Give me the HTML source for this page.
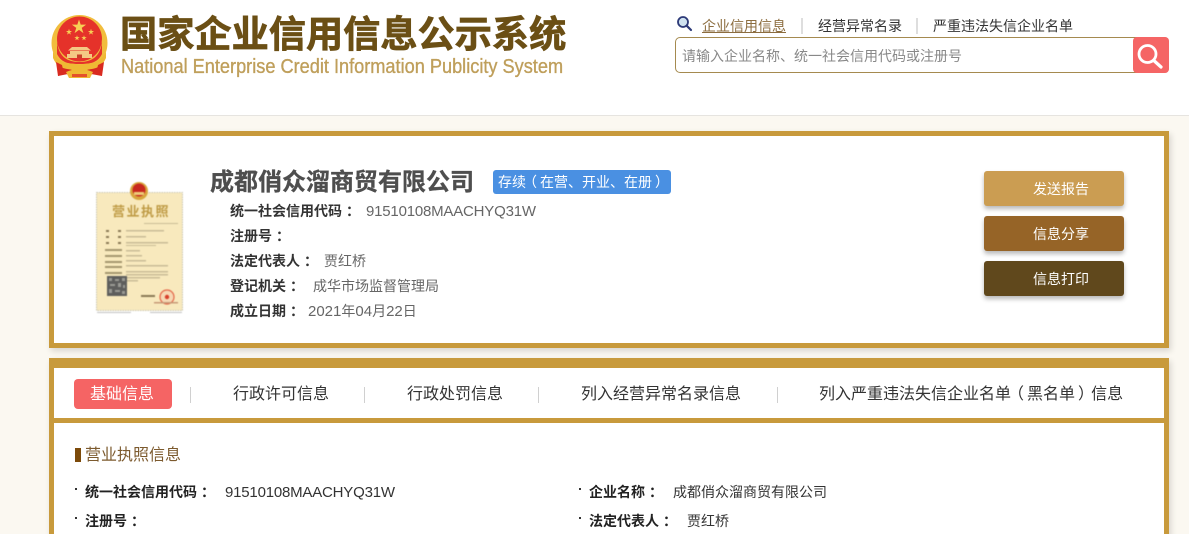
<!DOCTYPE html>
<html lang="zh-CN">
<head>
<meta charset="utf-8">
<title>国家企业信用信息公示系统</title>
<style>
*{margin:0;padding:0;box-sizing:border-box}
html,body{width:1189px;height:534px;overflow:hidden;background:#fbf8f1}
body{position:relative;font-family:"Liberation Sans","Noto Sans CJK SC",sans-serif;font-size:14px;color:#333}
.a{position:absolute;white-space:nowrap}
.hdr{left:0;top:0;width:1189px;height:116px;background:#fff;border-bottom:1px solid #e6e4e0}
.t{line-height:20px;height:20px}
.b{font-weight:bold;color:#333}
.v{color:#666}
.v2{color:#333}
.num{font-size:15px;letter-spacing:-.2px;line-height:0}
.sep{width:1px;background:#d0d0d0}
.sep2{width:2px;background:#dedede}
.card{left:49px;background:#fff;border:5px solid #c89a3c;box-shadow:2px 3px 6px rgba(0,0,0,.14)}
.btn{left:984px;width:140px;height:35px;border-radius:3px;color:#fff;line-height:36px;padding-left:49px;box-shadow:0 3px 5px rgba(0,0,0,.28)}
.tab{font-size:16px;line-height:22px;height:22px;color:#333;top:384px}
.par{line-height:0;position:relative}
.pl{left:-3px}
.pr{left:3px}
.co{left:4px}
</style>
</head>
<body>
<div class="a hdr"></div>

<svg class="a" style="left:50px;top:12px;filter:blur(.35px)" width="60" height="68" viewBox="0 0 60 68">
  <defs><polygon id="s" points="0,-1 .225,-.309 .951,-.309 .363,.118 .588,.809 0,.382 -.588,.809 -.363,.118 -.951,-.309 -.225,-.309"/></defs>
  <path d="M8 50 L8 64 L18 62 L22 66 L37 66 L41 62 L52 64 L52 50Z" fill="#d92a20"/>
  <circle cx="29.500" cy="31" r="28" fill="#f1bd3d"/>
  <circle cx="29.500" cy="27" r="22.500" fill="#e5322a"/>
  <path d="M7 30 C9 47 20 50 29.500 50 C39 50 50 47 52 30 L52 42 C47 52 38 52 29.500 52 C21 52 12 52 7 42Z" fill="#e5322a"/>
  <g fill="#f7cf55">
    <use href="#s" transform="translate(29,15) scale(7.500)"/>
    <use href="#s" transform="translate(19,20) scale(3.200)"/>
    <use href="#s" transform="translate(41,20) scale(3.200)"/>
    <use href="#s" transform="translate(27,26) scale(2.800)"/>
    <use href="#s" transform="translate(34,26) scale(2.800)"/>
  </g>
  <path d="M22 35h15l4 3.500H18zM20 39h19v3H20zM17 42h25v4H17z" fill="#f4c884"/>
  <rect x="27" y="42.500" width="5" height="3.500" fill="#c8402a"/>
  <path d="M3 40 C10 54 20 50 29.500 53 C39 50 49 54 56 40 L56 46 C50 60 38 56 29.500 59 C21 56 9 60 3 46Z" fill="#efb934"/>
  <path d="M6 50 L8 64 L14 62 L12 53Z M54 50 L52 64 L46 62 L48 53Z" fill="#d92a20"/>
  <path d="M16 60 Q29.500 54 43 60 L40 66 L19 66Z" fill="#efb934"/>
  <path d="M22 62h15v3H22z" fill="#e5502a"/>
</svg>

<div class="a" style="left:120px;top:11px;font-size:37.200px;line-height:46px;font-weight:bold;color:#6b4f15;-webkit-text-stroke:.7px #6b4f15">国家企业信用信息公示系统</div>
<div class="a" style="left:121px;top:54px;font-size:20px;line-height:26px;color:#bf9f5b;-webkit-text-stroke:.35px #bf9f5b;transform:scaleX(.908);transform-origin:0 0">National Enterprise Credit Information Publicity System</div>

<svg class="a" style="left:676px;top:15px" width="17" height="17" viewBox="0 0 17 17">
  <circle cx="7" cy="7" r="5" fill="#cfe2f0" stroke="#2d3a78" stroke-width="1.800"/>
  <path d="M10.800 10.800L15 15" stroke="#2d3a78" stroke-width="2.200" stroke-linecap="round"/>
</svg>
<div class="a t" style="left:702px;top:16px;color:#8c6d3f;text-decoration:underline">企业信用信息</div>
<div class="a sep2" style="left:801px;top:18px;height:16px"></div>
<div class="a t" style="left:818px;top:16px;color:#333">经营异常名录</div>
<div class="a sep2" style="left:916px;top:18px;height:16px"></div>
<div class="a t" style="left:933px;top:16px;color:#333">严重违法失信企业名单</div>

<div class="a" style="left:675px;top:37px;width:494px;height:36px;background:#fff;border:1px solid #a58a4f;border-radius:5px"></div>
<div class="a t" style="left:682px;top:46px;color:#888">请输入企业名称、统一社会信用代码或注册号</div>
<div class="a" style="left:1133px;top:37px;width:36px;height:36px;background:#f56565;border-radius:4px"></div>
<svg class="a" style="left:1133px;top:37px" width="36" height="36" viewBox="0 0 36 36">
  <circle cx="14.500" cy="17" r="8.500" fill="none" stroke="#fff" stroke-width="2.800"/>
  <path d="M20.800 23.500L28 30" stroke="#fff" stroke-width="3.200" stroke-linecap="round"/>
</svg>

<div class="a card" style="top:131px;width:1120px;height:217px"></div>

<svg class="a" style="left:94px;top:180px;filter:blur(.4px)" width="92" height="136" viewBox="0 0 92 136">
  <rect x="2.500" y="12.500" width="86" height="118" fill="#f8e9bd" stroke="#c9c6b4" stroke-dasharray="1.500 1"/>
  <circle cx="45" cy="11" r="9" fill="#d8a53c"/>
  <circle cx="45" cy="10" r="6.500" fill="#c8281e"/>
  <rect x="40" y="12" width="10" height="3" fill="#eecb78"/>
  <text x="18" y="36" font-size="13" font-weight="bold" fill="#bf9b45" letter-spacing="1.500" font-family="Liberation Sans,Noto Sans CJK SC,sans-serif">营业执照</text>
  <g fill="#c9bc96">
    <rect x="50" y="43" width="34" height="1"/>
    <rect x="32" y="50" width="38" height="1.500"/><rect x="32" y="56" width="20" height="1.500"/>
    <rect x="32" y="62" width="42" height="1.500"/><rect x="32" y="65" width="30" height="1"/>
    <rect x="32" y="70" width="14" height="1.500"/><rect x="32" y="75" width="16" height="1.500"/>
    <rect x="32" y="80" width="20" height="1.500"/><rect x="32" y="85" width="42" height="1.500"/>
    <rect x="32" y="91" width="42" height="1.500"/><rect x="32" y="94" width="42" height="1.500"/>
    <rect x="32" y="97" width="34" height="1.500"/><rect x="32" y="100" width="12" height="1.500"/>
  </g>
  <g fill="#8a7a55">
    <rect x="12" y="50" width="3" height="2"/><rect x="24" y="50" width="3" height="2"/>
    <rect x="12" y="56" width="3" height="2"/><rect x="24" y="56" width="3" height="2"/>
    <rect x="12" y="62" width="3" height="2"/><rect x="24" y="62" width="3" height="2"/>
    <rect x="11" y="69" width="17" height="2" opacity=".75"/><rect x="11" y="75" width="17" height="2" opacity=".75"/>
    <rect x="11" y="81" width="17" height="2" opacity=".75"/><rect x="11" y="86" width="17" height="2" opacity=".75"/>
    <rect x="11" y="92" width="17" height="2" opacity=".75"/>
  </g>
  <rect x="13" y="96" width="20" height="20" fill="#5e5e5c"/>
  <g fill="#9a9a94">
    <rect x="15" y="98" width="3" height="3"/><rect x="21" y="99" width="4" height="2"/><rect x="28" y="98" width="3" height="3"/>
    <rect x="16" y="104" width="5" height="2"/><rect x="24" y="103" width="3" height="4"/><rect x="29" y="105" width="2" height="3"/>
    <rect x="15" y="109" width="3" height="4"/><rect x="21" y="110" width="5" height="2"/><rect x="28" y="111" width="3" height="3"/>
  </g>
  <rect x="47" y="115" width="14" height="2" fill="#8a7a55"/>
  <circle cx="73" cy="117" r="7" fill="#f6d8b4" stroke="#e4684a" stroke-width="1.200"/>
  <circle cx="73" cy="117" r="2.200" fill="#d8402c"/>
  <rect x="60" y="122" width="24" height="1.500" fill="#c79a78"/>
  <rect x="3" y="132" width="34" height="1" fill="#c4c4c4"/>
  <rect x="56" y="132" width="32" height="1" fill="#c4c4c4"/>
</svg>

<div class="a" style="left:210px;top:167px;font-size:24px;line-height:32px;font-weight:bold;color:#4e4e4e;-webkit-text-stroke:.3px #4e4e4e">成都俏众溜商贸有限公司</div>
<div class="a" style="left:493px;top:170px;width:178px;height:24px;background:#4a90e2;border-radius:3px;color:#fff;line-height:24px;padding-left:5px">存续<span class="par pl">（</span>在营、开业、在册<span class="par pr">）</span></div>

<div class="a t b" style="left:230px;top:201px">统一社会信用代码<span class="par co">：</span></div>
<div class="a t v" style="left:366px;top:201px"><span class="num">91510108MAACHYQ31W</span></div>
<div class="a t b" style="left:230px;top:226px">注册号<span class="par co">：</span></div>
<div class="a t b" style="left:230px;top:251px">法定代表人<span class="par co">：</span></div>
<div class="a t v" style="left:324px;top:251px">贾红桥</div>
<div class="a t b" style="left:230px;top:276px">登记机关<span class="par co">：</span></div>
<div class="a t v" style="left:313px;top:276px">成华市场监督管理局</div>
<div class="a t b" style="left:230px;top:301px">成立日期<span class="par co">：</span></div>
<div class="a t v" style="left:308px;top:301px"><span class="num" style="letter-spacing:0">2021</span>年<span class="num" style="letter-spacing:0">04</span>月<span class="num" style="letter-spacing:0">22</span>日</div>

<div class="a btn" style="top:171px;background:#cb9d52">发送报告</div>
<div class="a btn" style="top:216px;background:#966427">信息分享</div>
<div class="a btn" style="top:261px;background:#60481c">信息打印</div>

<div class="a card" style="top:358px;width:1120px;height:190px;border-top-width:10px"></div>
<div class="a" style="left:49px;top:418px;width:1120px;height:5px;background:#c89a3c"></div>

<div class="a" style="left:74px;top:379px;width:98px;height:30px;background:#f56464;border-radius:4px;color:#fff;font-size:16px;line-height:31px;padding-left:16px">基础信息</div>
<div class="a sep" style="left:190px;top:387px;height:16px"></div>
<div class="a tab" style="left:233px">行政许可信息</div>
<div class="a sep" style="left:364px;top:387px;height:16px"></div>
<div class="a tab" style="left:407px">行政处罚信息</div>
<div class="a sep" style="left:538px;top:387px;height:16px"></div>
<div class="a tab" style="left:581px">列入经营异常名录信息</div>
<div class="a sep" style="left:777px;top:387px;height:16px"></div>
<div class="a tab" style="left:819px">列入严重违法失信企业名单<span class="par pl">（</span>黑名单<span class="par pr">）</span>信息</div>

<div class="a" style="left:75px;top:448px;width:6px;height:14px;background:#7c4a0a"></div>
<div class="a" style="left:85px;top:445px;font-size:16px;line-height:22px;color:#7c5a2e">营业执照信息</div>

<div class="a" style="left:75px;top:488px;width:2px;height:2px;background:#333"></div>
<div class="a t" style="left:85px;top:482px;font-weight:bold;color:#222">统一社会信用代码<span class="par co">：</span></div>
<div class="a t v2" style="left:225px;top:482px"><span class="num">91510108MAACHYQ31W</span></div>
<div class="a" style="left:75px;top:517px;width:2px;height:2px;background:#333"></div>
<div class="a t" style="left:85px;top:511px;font-weight:bold;color:#222">注册号<span class="par co">：</span></div>

<div class="a" style="left:579px;top:488px;width:2px;height:2px;background:#333"></div>
<div class="a t" style="left:589px;top:482px;font-weight:bold;color:#222">企业名称<span class="par co">：</span></div>
<div class="a t v2" style="left:673px;top:482px">成都俏众溜商贸有限公司</div>
<div class="a" style="left:579px;top:517px;width:2px;height:2px;background:#333"></div>
<div class="a t" style="left:589px;top:511px;font-weight:bold;color:#222">法定代表人<span class="par co">：</span></div>
<div class="a t v2" style="left:687px;top:511px">贾红桥</div>
</body>
</html>
